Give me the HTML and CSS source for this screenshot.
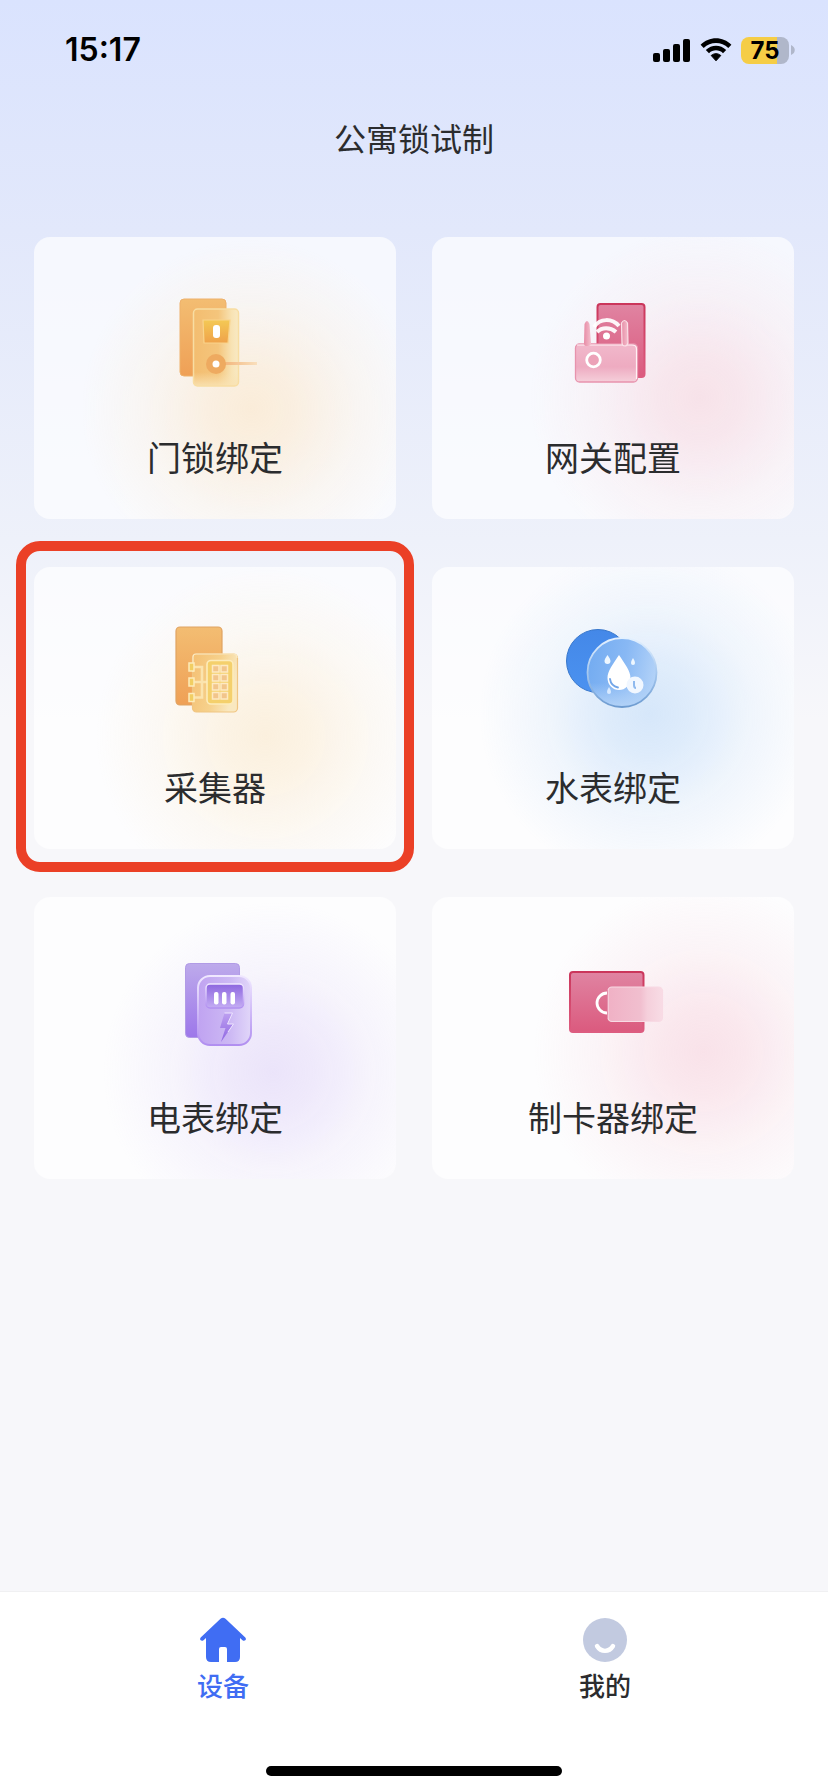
FILE: index.html
```html
<!DOCTYPE html>
<html lang="zh-CN">
<head>
<meta charset="utf-8">
<meta name="viewport" content="width=device-width, initial-scale=1">
<title>公寓锁试制</title>
<link rel="stylesheet" href="styles.css">
</head>
<body>
<div class="app">
  <div class="status">
    <span class="clock">15:17</span>
    <div class="indicators">
      <svg width="38" height="24" viewBox="0 0 38 24" aria-hidden="true">
        <rect x="0" y="15" width="7" height="9" rx="2"/><rect x="10" y="11" width="7" height="13" rx="2"/><rect x="20" y="6" width="7" height="18" rx="2"/><rect x="30" y="1" width="7" height="23" rx="2"/>
      </svg>
      <svg width="32" height="24" viewBox="0 0 32 24" aria-hidden="true">
        <path d="M0.6 6.8C9-2 23-2 31.4 6.8L28.3 10C21.5 3.2 10.5 3.2 3.7 10Z"/>
        <path d="M5.8 12C11.5 6.2 20.5 6.2 26.2 12L23 15.2C19 11.4 13 11.4 9 15.2Z"/>
        <path d="M11.2 17.5C14 15.1 18 15.1 20.8 17.5L16 22.8Z" stroke="#000" stroke-width="1" stroke-linejoin="round"/>
      </svg>
      <div class="battery"><span class="battery-level">75</span><svg width="4" height="10" viewBox="0 0 4 10" aria-hidden="true"><path d="M0 0C5 2 5 8 0 10Z" fill="#b0b7ca"/></svg></div>
    </div>
  </div>
  <header class="header"><h1 class="title">公寓锁试制</h1></header>

  <main class="grid">
    <button class="card glow-orange" type="button">
      <svg class="icon" viewBox="0 0 110 120" aria-hidden="true">
        <defs>
          <linearGradient id="orangeBack" x1="0" y1="0" x2="0" y2="1"><stop offset="0" stop-color="#f3bd72"/><stop offset="1" stop-color="#efa056"/></linearGradient>
          <linearGradient id="doorFront" x1="0" y1="0" x2="1" y2="0"><stop offset="0" stop-color="#f3bd70"/><stop offset=".55" stop-color="#f4c57c"/><stop offset=".85" stop-color="#f8e3b4"/><stop offset="1" stop-color="#f9e9c4"/></linearGradient>
          <linearGradient id="doorFade" x1="0" y1="0" x2="0" y2="1"><stop offset=".82" stop-color="#f9e3b4" stop-opacity="0"/><stop offset="1" stop-color="#f9e3b4" stop-opacity=".9"/></linearGradient>
          <linearGradient id="screen" x1="0" y1="0" x2="0" y2="1"><stop offset="0" stop-color="#f4c955"/><stop offset="1" stop-color="#efa24a"/></linearGradient>
          <linearGradient id="handle" x1="0" y1="0" x2="1" y2="0"><stop offset="0" stop-color="#f2b377"/><stop offset="1" stop-color="#f9dfbd"/></linearGradient>
        </defs>
        <rect x="20" y="19" width="46" height="77" rx="4" fill="url(#orangeBack)" stroke="#eeb16b"/>
        <rect x="33.500" y="29" width="45" height="77" rx="4" fill="url(#doorFront)"/>
        <rect x="33.500" y="29" width="45" height="77" rx="4" fill="url(#doorFade)" stroke="#f8dda2" stroke-width="1.500"/>
        <path d="M43 40H70L68 63H44Z" fill="url(#screen)" stroke="#f9d48b" stroke-width="1.200"/>
        <rect x="53" y="45" width="7" height="13" rx="3" fill="#fff"/>
        <rect x="62" y="82" width="35" height="3" fill="url(#handle)"/>
        <circle cx="56" cy="84" r="10" fill="#eeaa60"/>
        <circle cx="56" cy="84" r="3.500" fill="#fff"/>
      </svg>
      <span class="label">门锁绑定</span>
    </button>

    <button class="card glow-pink" type="button">
      <svg class="icon" viewBox="-2 0 110 120" aria-hidden="true">
        <defs>
          <linearGradient id="pinkBack" x1="0" y1="0" x2="0" y2="1"><stop offset="0" stop-color="#e084a2"/><stop offset="1" stop-color="#db5a7e"/></linearGradient>
          <linearGradient id="pinkEdge" x1="0" y1="0" x2="0" y2="1"><stop offset="0" stop-color="#cb365b"/><stop offset="1" stop-color="#dd5c80"/></linearGradient>
          <linearGradient id="router" x1="0" y1="0" x2="0" y2="1"><stop offset="0" stop-color="#f1b8cb"/><stop offset=".6" stop-color="#eeabc1"/><stop offset="1" stop-color="#f5cfda"/></linearGradient>
          <linearGradient id="antenna" x1="0" y1="0" x2="1" y2="0"><stop offset="0" stop-color="#e78ca6"/><stop offset="1" stop-color="#f4bfcd"/></linearGradient>
        </defs>
        <rect x="37.500" y="24" width="47" height="73" rx="3" fill="url(#pinkBack)" stroke="url(#pinkEdge)" stroke-width="2"/>
        <g fill="none" stroke="#fff" stroke-opacity=".93" stroke-width="4">
          <path d="M34 47C40 38 52 38 59 46"/><path d="M37 52C42 47 50 47 56 52"/>
        </g>
        <circle cx="46.500" cy="56" r="3.500" fill="#fff"/>
        <rect x="15.500" y="64" width="62" height="38" rx="4" fill="url(#router)" stroke="#e793ad" stroke-width="1.300"/>
        <path d="M17 65H72Q76.500 65 76.500 69V99" fill="none" stroke="#fff0f4" stroke-width="1.200"/>
        <path d="M24.500 44Q27 38 29.500 44L31 63Q31 66 28 66H26Q24 66 24 63Z" fill="url(#antenna)"/>
        <path d="M61.500 43Q64.500 38 67.500 43L68 63Q67 66 65 66Q62 66 62 63Z" fill="url(#antenna)" stroke="#fbe0e7" stroke-width="1.200"/>
        <circle cx="33.500" cy="80" r="6.800" fill="#eca2b8" stroke="#fff" stroke-width="2.800"/>
      </svg>
      <span class="label">网关配置</span>
    </button>

    <button class="card glow-amber highlighted" type="button">
      <svg class="icon" viewBox="0 0 110 120" aria-hidden="true">
        <defs>
          <linearGradient id="panel" x1="0" y1="0" x2="1" y2=".3"><stop offset="0" stop-color="#f4bf72"/><stop offset=".6" stop-color="#f6d18c"/><stop offset="1" stop-color="#f9e8c0"/></linearGradient>
        </defs>
        <rect x="16" y="17" width="46" height="78" rx="4" fill="url(#orangeBack)" stroke="#e0a362" stroke-width="1.200"/>
        <rect x="32.500" y="44" width="45" height="58" rx="4" fill="url(#panel)" stroke="#f0c582" stroke-width="1.200"/>
        <path d="M33 62V47Q33 44 36 44H73Q77 44 77 48" fill="none" stroke="#fcecc5" stroke-width="1.200"/>
        <path d="M34 57H42V87.500H34M34 72H47" fill="none" stroke="#fbe4ae" stroke-width="2.600"/>
        <g fill="#f1ce62" stroke="#fdebbb" stroke-width="1.500"><rect x="29" y="53" width="5" height="8"/><rect x="29" y="68" width="5" height="8"/><rect x="29" y="83.500" width="5" height="8"/></g>
        <rect x="47" y="50.500" width="26" height="43.500" rx="4" fill="#f4d06c" stroke="#fdecbb" stroke-width="1.600"/>
        <g fill="#f2c58b" stroke="#fde9c2" stroke-width="1.500">
          <rect x="52.500" y="55.500" width="6.500" height="6.500"/><rect x="61" y="55.500" width="6.500" height="6.500"/>
          <rect x="52.500" y="64.500" width="6.500" height="6.500"/><rect x="61" y="64.500" width="6.500" height="6.500"/>
          <rect x="52.500" y="73.500" width="6.500" height="6.500"/><rect x="61" y="73.500" width="6.500" height="6.500"/>
          <rect x="52.500" y="82.500" width="6.500" height="6.500"/><rect x="61" y="82.500" width="6.500" height="6.500"/>
        </g>
      </svg>
      <span class="label">采集器</span>
    </button>

    <button class="card glow-blue" type="button">
      <svg class="icon" viewBox="8 0 110 120" aria-hidden="true">
        <defs>
          <linearGradient id="blueBack" x1="0" y1="0" x2="0" y2="1"><stop offset="0" stop-color="#4488e8"/><stop offset="1" stop-color="#4b92f0"/></linearGradient>
          <linearGradient id="blueFront" x1="0" y1=".4" x2="1" y2=".6"><stop offset="0" stop-color="#74acf1"/><stop offset=".5" stop-color="#88b8f4"/><stop offset="1" stop-color="#b4d3f8"/></linearGradient>
          <linearGradient id="blueFade" x1="0" y1="0" x2="0" y2="1"><stop offset=".65" stop-color="#b2d2f7" stop-opacity="0"/><stop offset="1" stop-color="#b2d2f7"/></linearGradient>
          <linearGradient id="rim" x1="0" y1="0" x2="0" y2="1"><stop offset="0" stop-color="#e4f1ff"/><stop offset=".5" stop-color="#a6c8ef"/><stop offset="1" stop-color="#6d9bd0"/></linearGradient>
        </defs>
        <circle cx="48" cy="51" r="31.500" fill="url(#blueBack)" stroke="#3978cc"/>
        <circle cx="72" cy="62.500" r="34.500" fill="url(#blueFront)"/>
        <circle cx="72" cy="62.500" r="34.500" fill="url(#blueFade)" stroke="url(#rim)" stroke-width="1.800"/>
        <path d="M69 45C75 54 80.500 61 80.500 68A11.500 12 0 0 1 57.500 68C57.500 61 63 54 69 45Z" fill="#fff"/>
        <path d="M60 69Q61 76 68 77.500" fill="none" stroke="#73a6e8" stroke-width="1.800" stroke-linecap="round"/>
        <path d="M57.500 45Q60.500 49 60.500 51A3 3 0 0 1 54.500 51Q54.500 49 57.500 45Z" fill="#eef7ff"/>
        <path d="M83 48Q85 51 85 53A2 2 0 0 1 81 53Q81 51 83 48Z" fill="#eef7ff"/>
        <path d="M59 77Q61 80 61 82A2 2 0 0 1 57 82Q57 80 59 77Z" fill="#d9eaff"/>
        <circle cx="85" cy="75" r="8.500" fill="#f1f7ff"/>
        <path d="M84 71V75Q84 78 86 78" fill="none" stroke="#8eb9ee" stroke-width="2"/>
      </svg>
      <span class="label">水表绑定</span>
    </button>

    <button class="card glow-violet" type="button">
      <svg class="icon" viewBox="0 -5 110 120" aria-hidden="true">
        <defs>
          <linearGradient id="violetBack" x1="0" y1="0" x2="0" y2="1"><stop offset="0" stop-color="#bdaaeb"/><stop offset="1" stop-color="#9d77ea"/></linearGradient>
          <linearGradient id="violetFront" x1="0" y1="0" x2="1" y2="0"><stop offset="0" stop-color="#c0a3f1"/><stop offset=".6" stop-color="#ccb8f4"/><stop offset="1" stop-color="#e1d6f9"/></linearGradient>
          <linearGradient id="violetScreen" x1="0" y1="0" x2="0" y2="1"><stop offset="0" stop-color="#8d66df"/><stop offset="1" stop-color="#c4adf3"/></linearGradient>
          <linearGradient id="bolt" x1="0" y1="0" x2="0" y2="1"><stop offset="0" stop-color="#bda0f0"/><stop offset="1" stop-color="#8f66e2"/></linearGradient>
          <linearGradient id="violetRim" x1="0" y1="0" x2="0" y2="1"><stop offset="0" stop-color="#f0e8ff"/><stop offset="1" stop-color="#b18ff0"/></linearGradient>
        </defs>
        <rect x="25.500" y="18.500" width="54" height="74" rx="4" fill="url(#violetBack)" stroke="#b19be6"/>
        <rect x="38" y="31" width="53" height="69" rx="12" fill="url(#violetFront)" stroke="url(#violetRim)" stroke-width="2"/>
        <rect x="46" y="39" width="37.500" height="24" rx="4" fill="url(#violetScreen)" stroke="url(#violetRim)" stroke-width="1.500"/>
        <g fill="#fff"><rect x="54" y="47" width="4.500" height="12.500" rx="2"/><rect x="62" y="47" width="4.500" height="12.500" rx="2"/><rect x="70.500" y="47" width="4.500" height="12.500" rx="2"/></g>
        <path d="M64.500 68H72.500L67.500 79H73.500L61 97L65.500 83H60Z" fill="url(#bolt)"/>
        <path d="M64.500 68H72.500L67.500 79H73.500L68 87" fill="none" stroke="#eee5ff"/>
      </svg>
      <span class="label">电表绑定</span>
    </button>

    <button class="card glow-rose" type="button">
      <svg class="icon" viewBox="8 -5 110 120" aria-hidden="true">
        <defs>
          <linearGradient id="keycard" x1="0" y1="0" x2="1" y2="0"><stop offset="0" stop-color="#f0b1c5"/><stop offset=".6" stop-color="#f1bfcf"/><stop offset=".72" stop-color="#f5cfdb"/><stop offset="1" stop-color="#f8dce5"/></linearGradient>
        </defs>
        <rect x="20" y="27" width="73.500" height="60" rx="3" fill="url(#pinkBack)" stroke="url(#pinkEdge)" stroke-width="2"/>
        <path d="M57 48A10 10 0 0 0 57 68" fill="none" stroke="#fff" stroke-width="2.800"/>
        <rect x="58" y="42" width="54.500" height="34.500" rx="4" fill="url(#keycard)" stroke="#f8dae4" stroke-width="1.200"/>
        <path d="M57.500 45V73" stroke="#e590ac" stroke-width="1"/>
      </svg>
      <span class="label">制卡器绑定</span>
    </button>
  </main>

  <footer class="footer">
    <nav class="tabs">
      <button class="tab active" type="button" aria-current="page">
        <svg width="48" height="46" viewBox="0 0 48 46" aria-hidden="true">
          <path d="M21.500 1.800Q24 -.5 26.500 1.800L46.300 20.500Q47.500 22 46.300 23.300Q45 24.300 43.500 23.200L41 21V40Q41 45 36 45H28V32Q28 30 26 30H22Q20 30 20 32V45H12Q7 45 7 40V21L4.500 23.200Q3 24.300 1.700 23.300Q.5 22 1.700 20.500Z" fill="#406df3"/>
        </svg>
        <span>设备</span>
      </button>
      <button class="tab" type="button">
        <svg width="48" height="46" viewBox="0 0 48 46" aria-hidden="true">
          <circle cx="24" cy="23" r="22" fill="#c2cae0"/>
          <path d="M16 29C20 35.500 28 35.500 32 29" fill="none" stroke="#fff" stroke-width="4.400" stroke-linecap="round"/>
        </svg>
        <span>我的</span>
      </button>
    </nav>
    <div class="home-indicator"></div>
  </footer>
</div>
</body>
</html>
```
FILE: styles.css
```css
* { box-sizing: border-box; }

body {
  margin: 0;
  font-family: Inter, "Noto Sans CJK SC", sans-serif;
  color: #2b2c2e;
  background: #f7f7fa;
}

button {
  margin: 0;
  border: 0;
  font: inherit;
  color: inherit;
  cursor: pointer;
}

.app {
  display: flex;
  flex-direction: column;
  min-height: 100vh;
  background: linear-gradient(#dae3fe 0, #e2e8fb 230px, #eef1fa 540px, #f7f7fa 720px);
}

.status {
  display: flex;
  align-items: center;
  justify-content: space-between;
  height: 100px;
  padding: 0 33px 0 65px;
  color: #000;
}

.clock {
  font-size: 32px;
  font-weight: 600;
  line-height: 40px;
}

.indicators {
  display: flex;
  align-items: center;
  gap: 9px;
}

.battery {
  display: flex;
  align-items: center;
  gap: 2px;
}

.battery-level {
  width: 48px;
  border-radius: 8px;
  background: linear-gradient(90deg, #f5cd46 75%, #b0b7ca 75%);
  font-size: 24px;
  font-weight: 700;
  line-height: 27px;
  text-align: center;
}

.header {
  padding: 16px 34px 0;
  text-align: center;
}

.title {
  margin: 0;
  font-size: 32px;
  font-weight: 400;
  line-height: 48px;
}

.grid {
  display: grid;
  grid-template-columns: 1fr 1fr;
  gap: 48px 36px;
  padding: 73px 34px 48px;
}

.card {
  --glow: 255, 220, 160;
  --at: 60% 60%;
  position: relative;
  display: flex;
  flex-direction: column;
  align-items: center;
  gap: 35px;
  padding: 43px 0 36px;
  border-radius: 16px;
  background:
    radial-gradient(circle 170px at var(--at), rgba(var(--glow), 1) 0, rgba(var(--glow), .8) 25%, rgba(var(--glow), .3) 62%, rgba(var(--glow), 0) 100%),
    rgba(255, 255, 255, .68);
}

.glow-orange { --glow: 250, 236, 217; --at: 60% 61%; }
.glow-pink { --glow: 247, 226, 233; --at: 74% 57%; }
.glow-amber { --glow: 251, 240, 222; --at: 64% 60%; }
.glow-blue { --glow: 214, 231, 250; --at: 60% 52%; }
.glow-violet { --glow: 235, 228, 250; --at: 66% 62%; }
.glow-rose { --glow: 249, 226, 233; --at: 75% 55%; }

.highlighted::after {
  content: "";
  position: absolute;
  inset: -26px -18px -23px;
  border: 10px solid #eb4026;
  border-radius: 24px;
  pointer-events: none;
}

.icon {
  display: block;
  width: 110px;
  height: 120px;
}

.label {
  font-size: 34px;
  line-height: 48px;
}

.footer {
  margin-top: auto;
  padding-bottom: 16px;
  border-top: 1px solid #f0f0f2;
  background: #fff;
}

.tabs {
  display: flex;
  padding: 0 32px;
}

.tab {
  flex: 1;
  display: flex;
  flex-direction: column;
  align-items: center;
  gap: 6px;
  padding: 25px 0 61px;
  background: none;
  font-size: 26px;
  font-weight: 500;
  line-height: 36px;
}

.active { color: #406df3; }

.home-indicator {
  width: 296px;
  height: 10px;
  margin: 0 auto;
  border-radius: 5px;
  background: #000;
}
```
